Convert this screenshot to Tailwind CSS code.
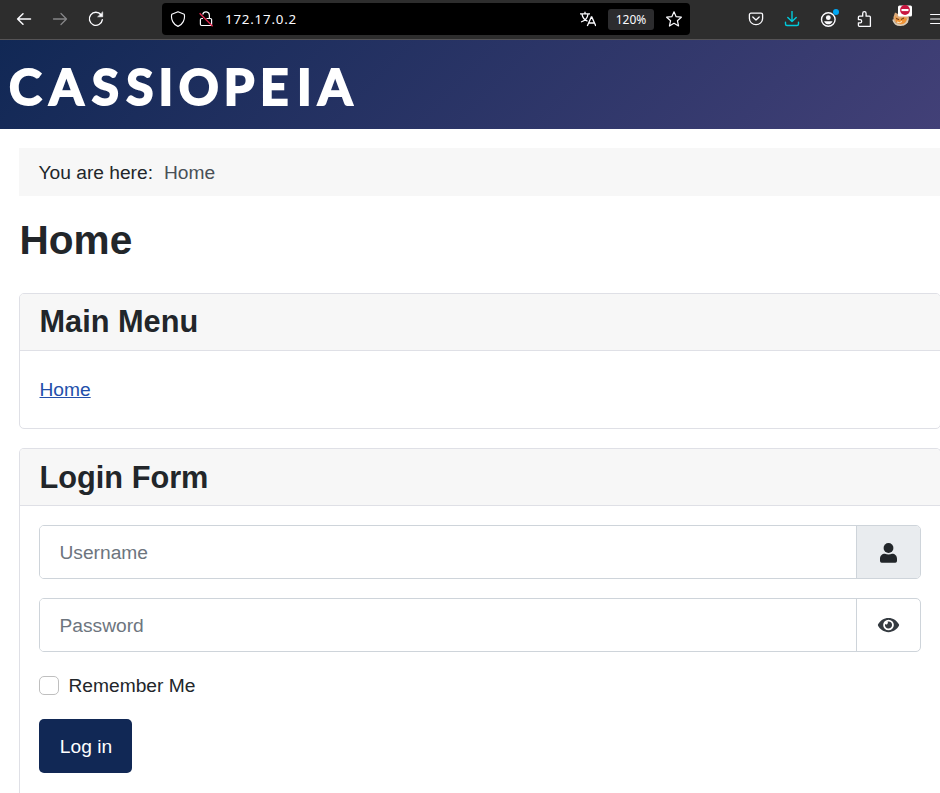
<!DOCTYPE html>
<html lang="en">
<head>
<meta charset="utf-8">
<title>Home</title>
<script src="https://cdn.jsdelivr.net/npm/@tailwindcss/browser@4"></script>
</head>
<body class="h-[793px] w-[940px] overflow-hidden bg-white font-['Liberation_Sans',sans-serif] text-[19.2px] leading-[29px] text-[#22262a]">
<nav class="flex h-10 items-center overflow-hidden border-b border-[#555355] bg-[#2d2d2d] pb-px pl-4 text-[#fbfbfe]">
  <svg class="h-4 w-4 shrink-0" viewBox="0 0 16 16" fill="none" stroke="currentColor" stroke-width="1.5" stroke-linecap="round" stroke-linejoin="round"><path d="M14.5 8H1.6M7 2.700 1.600 8 7 13.300"/></svg>
  <svg class="ml-5 h-4 w-4 shrink-0 text-[#858587]" viewBox="0 0 16 16" fill="none" stroke="currentColor" stroke-width="1.3" stroke-linecap="round" stroke-linejoin="round"><path d="M1.500 8h13M9 2.500 14.500 8 9 13.500"/></svg>
  <svg class="ml-5 h-4 w-4 shrink-0" viewBox="0 0 16 16" fill="none" stroke="currentColor" stroke-width="1.4" stroke-linecap="round"><path d="M13 3.800A6.500 6.500 0 1 0 14.300 8.800"/><path d="M14.700 1.200v4.600H10z" fill="currentColor" stroke-width=".6" stroke-linejoin="round"/></svg>
  <div class="ml-[58px] flex h-8 w-[528px] shrink-0 items-center rounded bg-black pl-2">
    <svg class="h-4 w-4" viewBox="0 0 16 16" fill="none" stroke="currentColor" stroke-width="1.15" stroke-linejoin="round"><path d="M8 .7 14.200 3.200C15.500 8.500 12.500 13.600 8 15.400 3.500 13.600.5 8.500 1.800 3.200Z"/></svg>
    <svg class="ml-3 h-4 w-4" viewBox="0 0 16 16" fill="none" stroke="currentColor" stroke-width="1.200"><path d="M5 7.500H3.600a1.200 1.200 0 0 0-1.200 1.200v4.600a1.200 1.200 0 0 0 1.200 1.200h8.800a1.200 1.200 0 0 0 1.200-1.200V8.700a1.200 1.200 0 0 0-1.200-1.200H8.500M4.700 3.500a3.400 3.400 0 0 1 6.700.7v3.300"/><path d="M1.600 2.200l13 13" stroke="#e22850" stroke-width="1.400"/></svg>
    <span class="ml-[11px] flex-1 font-['Noto_Sans',sans-serif] text-[13.3px] tracking-[0.8px]">172.17.0.2</span>
    <svg class="mr-3 h-4 w-4" viewBox="0 0 16 16" fill="none" stroke="currentColor" stroke-width="1.3"><path d="M0 2.800h10M5 .8v2M2 3.200c.5 3.500 3 6 5.500 7M8 3.200C7.500 7 4.500 10 1 11M7.300 15l4-9h.5l4 9M8.700 12h6"/></svg>
    <span class="mr-3 flex h-[21px] w-[46px] items-center justify-center rounded-[3px] bg-[#2c2c2e] font-['Noto_Sans',sans-serif] text-[12px]">120%</span>
    <svg class="mr-2 h-4 w-4" viewBox="0 0 16 16" fill="none" stroke="currentColor" stroke-width="1.2" stroke-linejoin="round"><path d="m8 .8 2.150 4.900 5.200.5-3.950 3.500 1.150 5.300L8 12.300 3.450 15 4.600 9.700.65 6.200l5.200-.5z"/></svg>
  </div>
  <svg class="ml-[58px] h-4 w-4 shrink-0" viewBox="0 0 16 16" fill="none" stroke="currentColor" stroke-width="1.3" stroke-linecap="round" stroke-linejoin="round"><path d="M3 2.200h10a1.600 1.600 0 0 1 1.600 1.600V7.500A6.600 6.200 0 0 1 1.400 7.500V3.800A1.600 1.600 0 0 1 3 2.200Z"/><path d="m4.800 6 3.200 3 3.200-3"/></svg>
  <svg class="ml-5 h-4 w-4 shrink-0 text-[#00cadb]" viewBox="0 0 16 16" fill="none" stroke="currentColor" stroke-width="1.4" stroke-linecap="round" stroke-linejoin="round"><path d="M8 .5v10M3.800 6.400 8 10.600l4.200-4.200M1.500 11.200v1.800a1.500 1.500 0 0 0 1.500 1.500h10a1.500 1.500 0 0 0 1.500-1.500v-1.800"/></svg>
  <div class="relative ml-5 h-4 w-4 shrink-0">
    <svg class="h-4 w-4 overflow-visible" viewBox="0 0 16 16"><circle cx="8.300" cy="8.500" r="6.800" fill="none" stroke="currentColor" stroke-width="1.4"/><circle cx="8.300" cy="6.700" r="2.400" fill="currentColor"/><path d="M4.100 10.200h8.400c-.6 2-2.200 3.100-4.200 3.100s-3.600-1.100-4.200-3.100Z" fill="currentColor"/></svg>
    <span class="absolute -top-[2px] left-[13px] h-[6px] w-[6px] rounded-full bg-[#00a8f4]"></span>
  </div>
  <svg class="ml-5 h-4 w-4 shrink-0 overflow-visible" viewBox="0 0 16 16" fill="none" stroke="currentColor" stroke-width="1.300" stroke-linejoin="round"><path d="M6.700 5.200V2.400a1.700 1.700 0 0 1 3.400 0v2.800h3.300a1 1 0 0 1 1 1v9.100H3.400a1 1 0 0 1-1-1v-2.500h1.700a1.600 1.600 0 0 0 0-3.200H2.400V6.200a1 1 0 0 1 1-1z"/></svg>
  <svg class="ml-5 h-5 w-5 shrink-0 overflow-visible" viewBox="0 0 20 20"><path d="M1.500 8 3 3.500l3 1.500 6-2 5 5-1 5.500-4 3-6-.5-4.500-4.500z" fill="#d9a97a"/><path d="m3 7 4 3 5-2 3 2-2 4-4 1.500L4 13z" fill="#f09335"/><path d="M1 10.500c2 8 14 7.500 15-1" fill="none" stroke="#d9ccb9" stroke-width="1.500"/><path d="m4 9.500 3 1M9 10.500l3-1.500" stroke="#60371e"/><path d="M5 13q2.500 1.500 5-.5" fill="none" stroke="#fff3d8"/><rect x="6" y="-3.500" width="14" height="11" rx="1.500" fill="#fff"/><circle cx="13" cy="1" r="4.900" fill="#c8153f"/><rect x="9.500" y="0" width="7" height="2.100" fill="#fff"/></svg>
  <svg class="ml-[17px] h-4 w-4 shrink-0" viewBox="0 0 16 16" fill="none" stroke="currentColor" stroke-width="1.200" stroke-linecap="round"><path d="M1.600 3.500h14M1.600 8h14M1.600 12.500h14"/></svg>
</nav>
<header class="h-[89px] bg-[linear-gradient(135deg,#112855_0%,#424077_100%)]">
  <svg class="h-full w-[370px]" viewBox="0 0 370 89" role="img" aria-label="Cassiopeia"><text x="9 49.300 91.800 126.300 158.500 178.700 223.800 260 297 318" y="65" class="fill-white stroke-white stroke-[2px] font-['Lato',sans-serif] text-[49.500px] font-bold">CASSIOPEIA</text></svg>
</header>
<main class="w-[922px] pl-[19px] pt-[19px]">
  <div class="flex h-12 w-[922px] items-center bg-[#f7f7f7] pl-[19.500px]"><span>You are here:</span><span class="ml-[11px] text-[#495057]">Home</span></div>
  <h1 class="mt-5 h-12 pl-[0.500px] text-[40.600px] font-bold leading-[48px]">Home</h1>
  <section class="mt-[29px] h-[136px] w-[922px] rounded-[5px] border border-[#dfe0e6]">
    <h2 class="h-[57px] rounded-t-[4px] border-b border-[#dfe0e6] bg-[#f7f7f7] pl-[19.500px] text-[30.720px] font-bold leading-[55px]">Main Menu</h2>
    <div class="pl-[19.500px] pt-6"><a href="#" class="text-[#224faa] underline">Home</a></div>
  </section>
  <section class="mt-[19px] h-[345px] w-[922px] rounded-t-[5px] border border-b-0 border-[#dfe0e6]">
    <h2 class="h-[57px] rounded-t-[4px] border-b border-[#dfe0e6] bg-[#f7f7f7] pl-[19.500px] text-[30.720px] font-bold leading-[57px]">Login Form</h2>
    <form class="px-[19px] pt-[19px]">
      <div class="flex h-[54px] w-[882px] overflow-hidden rounded-[5px] border border-[#ced4da]">
        <input type="text" placeholder="Username" class="min-w-0 flex-1 bg-white pl-[19.500px] placeholder:text-[#6d757e]">
        <span class="flex w-16 items-center justify-center border-l border-[#ced4da] bg-[#e9ecef]"><svg class="h-5 w-[17px] translate-y-px" viewBox="0 0 17 20" fill="#22262a"><circle cx="8.500" cy="5" r="4.900"/><path d="M5 10.700c2 1 5 1 7 0 3 0 5 2 5 5V18a1.700 1.700 0 0 1-1.700 1.700H1.700A1.700 1.700 0 0 1 0 18v-2.300c0-3 2-5 5-5Z"/></svg></span>
      </div>
      <div class="mt-[19px] flex h-[54px] w-[882px] overflow-hidden rounded-[5px] border border-[#ced4da]">
        <input type="password" placeholder="Password" class="min-w-0 flex-1 bg-white pl-[19.500px] placeholder:text-[#6d757e]">
        <button type="button" aria-label="Show password" class="flex w-16 items-center justify-center border-l border-[#ced4da]"><svg class="h-[19px] w-[22px] -translate-x-[0.500px] -translate-y-[0.500px]" viewBox="0 0 576 512" fill="#343a40"><path d="M572.500 241.400C518.300 135.600 410.900 64 288 64S57.700 135.600 3.500 241.400a32.400 32.400 0 0 0 0 29.200C57.700 376.400 165.100 448 288 448s230.300-71.600 284.500-177.400a32.400 32.400 0 0 0 0-29.200zM288 400a144 144 0 1 1 144-144 143.900 143.900 0 0 1-144 144zm0-240a95.300 95.300 0 0 0-25.300 3.800 47.900 47.900 0 0 1-66.900 66.900A95.800 95.800 0 1 0 288 160z"/></svg></button>
      </div>
      <label class="mt-[19px] flex h-[29px] items-center"><input type="checkbox" class="h-[19px] w-5 appearance-none rounded-[5px] border border-[#bfbfbf]"><span class="ml-[9.500px]">Remember Me</span></label>
      <button type="button" class="mt-[19px] h-[54px] w-[93px] rounded-[5px] bg-[#112855] pl-px text-white">Log in</button>
    </form>
  </section>
</main>
</body>
</html>
